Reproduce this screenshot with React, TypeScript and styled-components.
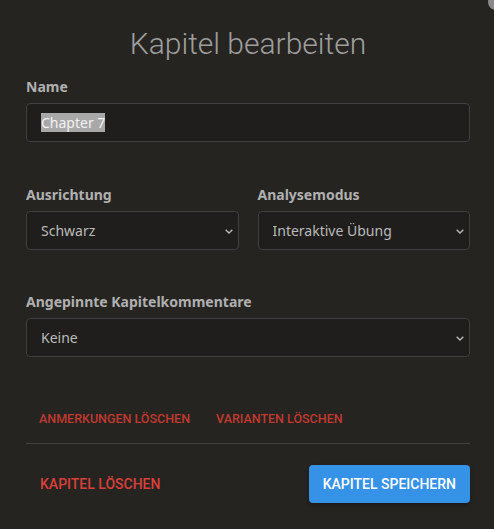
import React from "react";
import styled, { createGlobalStyle } from "styled-components";

const Global = createGlobalStyle`
  html, body { margin: 0; padding: 0; background: #262421; }
  body { width: 494px; height: 529px; overflow: hidden; font-family: "Noto Sans", sans-serif; }
  * { box-sizing: border-box; }
`;

const Dialog = styled.div`
  position: relative;
  width: 494px;
  height: 529px;
  background: #262421;
  padding: 26px 24px 0 26px;
  display: flex;
  flex-direction: column;
`;

const CloseKnob = styled.div`
  position: absolute;
  top: -6px;
  right: -10px;
  width: 16px;
  height: 16px;
  border-radius: 50%;
  background: #8a8a8a;
`;

const Title = styled.h2`
  margin: 0 0 15px 0;
  font-family: Roboto, sans-serif;
  font-weight: 300;
  font-size: 30px;
  line-height: 36px;
  color: #9e9e9e;
  text-align: center;
`;

const Group = styled.div<{ $mb?: number }>`
  display: flex;
  flex-direction: column;
  gap: 6px;
  margin-bottom: ${(p) => p.$mb ?? 0}px;
  min-width: 0;
`;

const Label = styled.label`
  font-family: "Noto Sans", sans-serif;
  font-weight: 700;
  font-size: 14px;
  line-height: 20px;
  color: #b0b0b0;
`;

const Field = styled.div`
  height: 39px;
  border: 1px solid #404040;
  border-radius: 4px;
  background: #1f1e1c;
  display: flex;
  align-items: center;
  padding: 0 14px;
  font-size: 14px;
  color: #bababa;
`;

const Selected = styled.span`
  background: #a8a8a8;
  color: #f2f2f2;
  line-height: 19px;
`;

const SelectWrap = styled.div`
  position: relative;
`;

const Select = styled.select`
  appearance: none;
  width: 100%;
  height: 39px;
  border: 1px solid #404040;
  border-radius: 4px;
  background: #1f1e1c;
  padding: 0 30px 0 14px;
  font-family: "Noto Sans", sans-serif;
  font-size: 14px;
  color: #bababa;
  outline: none;
`;

const Chevron = styled.svg`
  position: absolute;
  right: 6px;
  top: 50%;
  width: 8px;
  height: 5px;
  margin-top: -2px;
  pointer-events: none;
`;

const Row = styled.div`
  display: grid;
  grid-template-columns: 1fr 1fr;
  column-gap: 19px;
  margin-bottom: 42px;
`;

const SmallActions = styled.div`
  display: flex;
  margin-top: 46px;
  height: 30px;
  align-items: center;
`;

const TextButton = styled.button<{ $size: number; $color: string }>`
  background: none;
  border: none;
  padding: 0 13px;
  height: 30px;
  font-family: Roboto, sans-serif;
  font-weight: 500;
  font-size: ${(p) => p.$size}px;
  color: ${(p) => p.$color};
  text-transform: uppercase;
  cursor: pointer;
`;

const Divider = styled.hr`
  margin: 10px 0 0 0;
  border: none;
  border-top: 1px solid #404040;
`;

const Footer = styled.div`
  display: flex;
  justify-content: space-between;
  align-items: center;
  margin-top: 21px;
`;

const Primary = styled.button`
  height: 38px;
  padding: 0 14px;
  border: none;
  border-radius: 4px;
  background: #3692e7;
  color: #ffffff;
  font-family: Roboto, sans-serif;
  font-weight: 500;
  font-size: 14px;
  text-transform: uppercase;
  box-shadow: 0 2px 4px rgba(0, 0, 0, 0.3);
  cursor: pointer;
`;

const Arrow = () => (
  <Chevron viewBox="0 0 8 5">
    <path d="M0.7 0.7 L4 4 L7.3 0.7" fill="none" stroke="#bababa" strokeWidth="1.3" />
  </Chevron>
);

const SelectField = ({ options }: { options: string[] }) => (
  <SelectWrap>
    <Select defaultValue={options[0]}>
      {options.map((o) => (
        <option key={o}>{o}</option>
      ))}
    </Select>
    <Arrow />
  </SelectWrap>
);

export default function App() {
  return (
    <>
      <Global />
      <Dialog>
        <CloseKnob />
        <Title>Kapitel bearbeiten</Title>
        <Group $mb={43}>
          <Label>Name</Label>
          <Field>
            <Selected>Chapter 7</Selected>
          </Field>
        </Group>
        <Row>
          <Group>
            <Label>Ausrichtung</Label>
            <SelectField options={["Schwarz", "Weiß"]} />
          </Group>
          <Group>
            <Label>Analysemodus</Label>
            <SelectField options={["Interaktive Übung", "Normale Analyse"]} />
          </Group>
        </Row>
        <Group>
          <Label>Angepinnte Kapitelkommentare</Label>
          <SelectField options={["Keine"]} />
        </Group>
        <SmallActions>
          <TextButton $size={12.5} $color="#c1392f">Anmerkungen löschen</TextButton>
          <TextButton $size={12.5} $color="#c1392f">Varianten löschen</TextButton>
        </SmallActions>
        <Divider />
        <Footer>
          <TextButton $size={14} $color="#d9403a" style={{ paddingLeft: 14 }}>
            Kapitel löschen
          </TextButton>
          <Primary>Kapitel speichern</Primary>
        </Footer>
      </Dialog>
    </>
  );
}
